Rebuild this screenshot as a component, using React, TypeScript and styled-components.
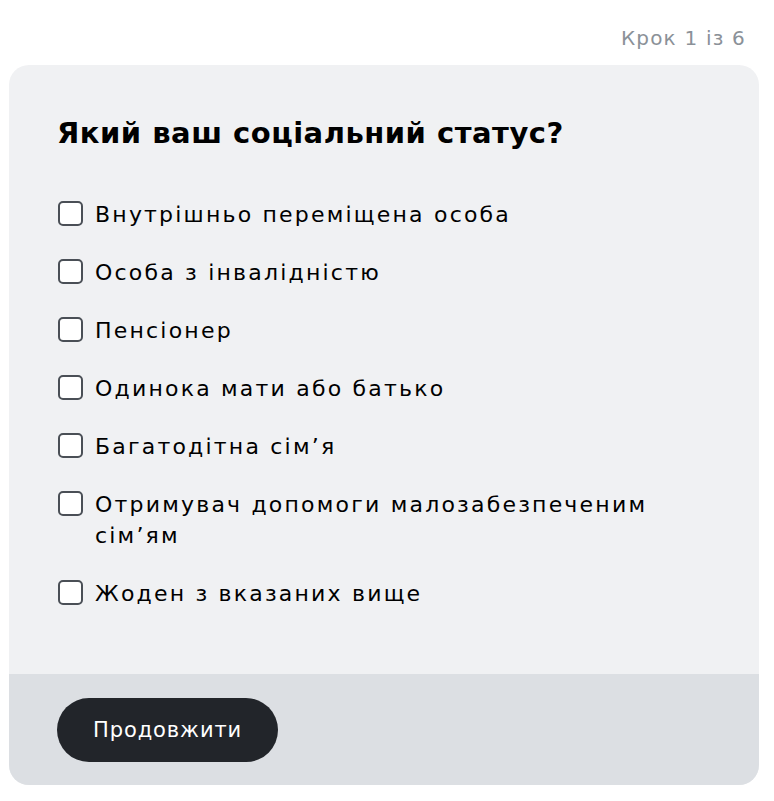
import React, { useState } from 'react'
import styled, { createGlobalStyle } from 'styled-components'

const GlobalStyle = createGlobalStyle`
  body {
    margin: 0;
    background: #ffffff;
    font-family: "DejaVu Sans", "Noto Sans", sans-serif;
    color: #000000;
  }
`

const Page = styled.div`
  width: 774px;
  padding: 24px 15px 16px 9px;
  box-sizing: border-box;
`

const StepLabel = styled.div`
  text-align: right;
  padding-right: 13px;
  font-size: 20px;
  line-height: 28px;
  letter-spacing: 1.2px;
  color: #8b9198;
  margin-bottom: 13px;
`

const Card = styled.div`
  background: #f0f1f3;
  border-radius: 20px;
  overflow: hidden;
`

const Body = styled.div`
  padding: 48px 48px 65px 48px;
`

const Title = styled.h1`
  margin: 0 0 46px;
  font-size: 29px;
  line-height: 40px;
  font-weight: 700;
  letter-spacing: 0.5px;
`

const List = styled.div`
  display: flex;
  flex-direction: column;
  gap: 27px;
`

const Row = styled.label`
  display: flex;
  align-items: flex-start;
  gap: 12px;
  font-size: 22px;
  line-height: 31px;
  letter-spacing: 2.2px;
  cursor: pointer;
`

const Box = styled.span<{ checked: boolean }>`
  flex: none;
  width: 21px;
  height: 21px;
  margin-top: 2px;
  margin-left: 1px;
  border: 2.5px solid #4a4f56;
  border-radius: 5px;
  background: ${p => (p.checked ? '#4a4f56' : '#ffffff')};
  display: flex;
  align-items: center;
  justify-content: center;
`

const Footer = styled.div`
  background: #dcdfe3;
  padding: 24px 48px 23px;
`

const Button = styled.button`
  height: 64px;
  padding: 0 36px;
  border: none;
  border-radius: 32px;
  background: #22252a;
  color: #ffffff;
  font-family: "DejaVu Sans", "Noto Sans", sans-serif;
  font-size: 21px;
  letter-spacing: 0.9px;
  cursor: pointer;
`

const options = [
  'Внутрішньо переміщена особа',
  'Особа з інвалідністю',
  'Пенсіонер',
  'Одинока мати або батько',
  'Багатодітна сім’я',
  'Отримувач допомоги малозабезпеченим сім’ям',
  'Жоден з вказаних вище',
]

export default function App() {
  const [checked, setChecked] = useState<boolean[]>(options.map(() => false))

  return (
    <Page>
      <GlobalStyle />
      <StepLabel>Крок 1 із 6</StepLabel>
      <Card>
        <Body>
          <Title>Який ваш соціальний статус?</Title>
          <List>
            {options.map((o, i) => (
              <Row
                key={o}
                onClick={() => setChecked(c => c.map((v, j) => (j === i ? !v : v)))}
              >
                <Box checked={checked[i]}>
                  {checked[i] && (
                    <svg width="14" height="14" viewBox="0 0 14 14">
                      <path d="M2 7l3.5 3.5L12 3.5" stroke="#fff" strokeWidth="2" fill="none" />
                    </svg>
                  )}
                </Box>
                <span>{o}</span>
              </Row>
            ))}
          </List>
        </Body>
        <Footer>
          <Button>Продовжити</Button>
        </Footer>
      </Card>
    </Page>
  )
}
